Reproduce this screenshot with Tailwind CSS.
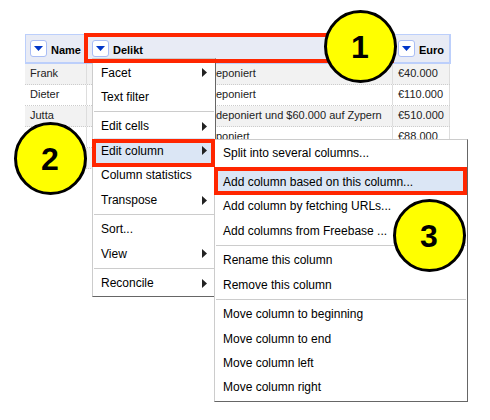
<!DOCTYPE html>
<html lang="en">
<head>
<meta charset="utf-8">
<title>Edit column menu</title>
<script src="https://cdn.jsdelivr.net/npm/@tailwindcss/browser@4"></script>
</head>
<body class="relative w-[490px] h-[420px] overflow-hidden bg-white font-['Liberation_Sans',Arial,sans-serif] text-[12px] text-[#222]">

<!-- Data table -->
<div class="pt-[34px] pl-[25px] text-[11px]">
  <div class="flex w-[426px] h-[30px] box-border border-2 border-t border-l border-[#bccffb] bg-[#e8ebf5] font-bold text-black">
    <div class="flex w-[61px] gap-[4px] pl-[4px] pt-[5px]">
      <span class="flex w-[17px] h-[17px] shrink-0 items-center justify-center rounded-[3px] border border-[#a9bdf5] bg-white"><svg width="9" height="5" viewBox="0 0 9 5"><path d="M0 0H9L4.5 5Z" fill="#0036c8"/></svg></span>
      <span class="leading-[21px]">Name</span>
    </div>
    <div class="flex w-[307px] gap-[4px] pl-[5px] pt-[5px]">
      <span class="flex w-[17px] h-[17px] shrink-0 items-center justify-center rounded-[3px] border border-[#a9bdf5] bg-white"><svg width="9" height="5" viewBox="0 0 9 5"><path d="M0 0H9L4.5 5Z" fill="#0036c8"/></svg></span>
      <span class="leading-[21px]">Delikt</span>
    </div>
    <div class="flex gap-[4px] pl-[4px] pt-[5px]">
      <span class="flex w-[17px] h-[17px] shrink-0 items-center justify-center rounded-[3px] border border-[#a9bdf5] bg-white"><svg width="9" height="5" viewBox="0 0 9 5"><path d="M0 0H9L4.5 5Z" fill="#0036c8"/></svg></span>
      <span class="leading-[21px]">Euro</span>
    </div>
  </div>
  <div class="w-[425px] leading-[19px] whitespace-nowrap">
    <div class="flex h-[21px] bg-[#f2f2f2] border-b border-dotted border-[#ccc]"><div class="w-[62px] pl-[5px] border-r border-[#ddd]">Frank</div><div class="w-[306px] pl-[129px] border-r border-[#ddd]">eponiert</div><div class="w-[57px] pl-[5px] border-r border-[#ddd]">€40.000</div></div>
    <div class="flex h-[21px] bg-white border-b border-dotted border-[#ccc]"><div class="w-[62px] pl-[5px] border-r border-[#ddd]">Dieter</div><div class="w-[306px] pl-[129px] border-r border-[#ddd]">eponiert</div><div class="w-[57px] pl-[5px] border-r border-[#ddd]">€110.000</div></div>
    <div class="flex h-[21px] bg-[#f2f2f2] border-b border-dotted border-[#ccc]"><div class="w-[62px] pl-[5px] border-r border-[#ddd]">Jutta</div><div class="w-[306px] pl-[129px] border-r border-[#ddd]">deponiert und $60.000 auf Zypern</div><div class="w-[57px] pl-[5px] border-r border-[#ddd]">€510.000</div></div>
    <div class="flex h-[21px] bg-white border-b border-dotted border-[#ccc]"><div class="w-[62px] border-r border-[#ddd]"></div><div class="w-[306px] pl-[129px] border-r border-[#ddd]">poniert</div><div class="w-[57px] pl-[5px] border-r border-[#ddd]">€88.000</div></div>
    <div class="flex w-[70px] h-[21px] bg-[#f2f2f2] border-b border-dotted border-[#ccc]"><div class="w-[62px] border-r border-[#ddd]"></div></div>
  </div>
</div>

<!-- Column menu -->
<div class="absolute left-[92px] top-[58px] w-[124px] h-[239px] border border-[#ccc] border-r-[#666] border-b-[#666] bg-white pt-px px-px text-[12px] leading-[24px] text-black whitespace-nowrap">
  <div class="flex items-center justify-between h-[25px] pl-[7px] pr-[7px]">Facet<svg width="5" height="9" viewBox="0 0 5 9"><path d="M0 0L5 4.5L0 9Z" fill="#222"/></svg></div>
  <div class="h-[24px] pl-[7px]">Text filter</div>
  <div class="h-[5px] pt-[2px]"><div class="h-px bg-[#ccc]"></div></div>
  <div class="flex items-center justify-between h-[24px] pl-[7px] pr-[7px]">Edit cells<svg width="5" height="9" viewBox="0 0 5 9"><path d="M0 0L5 4.5L0 9Z" fill="#222"/></svg></div>
  <div class="flex items-center justify-between h-[25px] pl-[7px] pr-[7px] bg-[#dbe6f5]">Edit column<svg width="5" height="9" viewBox="0 0 5 9"><path d="M0 0L5 4.5L0 9Z" fill="#222"/></svg></div>
  <div class="h-[25px] pl-[7px]">Column statistics</div>
  <div class="flex items-center justify-between h-[24px] pl-[7px] pr-[7px]">Transpose<svg width="5" height="9" viewBox="0 0 5 9"><path d="M0 0L5 4.5L0 9Z" fill="#222"/></svg></div>
  <div class="h-[5px] pt-[2px]"><div class="h-px bg-[#ccc]"></div></div>
  <div class="h-[24px] pl-[7px]">Sort...</div>
  <div class="flex items-center justify-between h-[25px] pl-[7px] pr-[7px]">View<svg width="5" height="9" viewBox="0 0 5 9"><path d="M0 0L5 4.5L0 9Z" fill="#222"/></svg></div>
  <div class="h-[5px] pt-[2px]"><div class="h-px bg-[#ccc]"></div></div>
  <div class="flex items-center justify-between h-[24px] pl-[7px] pr-[7px]">Reconcile<svg width="5" height="9" viewBox="0 0 5 9"><path d="M0 0L5 4.5L0 9Z" fill="#222"/></svg></div>
</div>

<!-- Edit column submenu -->
<div class="absolute left-[214px] top-[139px] w-[254px] h-[263px] border border-[#ccc] border-r-[#666] border-b-[#666] bg-white pt-px px-px text-[12px] leading-[24px] text-black whitespace-nowrap">
  <div class="h-[24px] pl-[7px]">Split into several columns...</div>
  <div class="h-[5px] pt-[2px]"><div class="h-px bg-[#ccc]"></div></div>
  <div class="h-[24px] pl-[7px] bg-[#dbe6f5]">Add column based on this column...</div>
  <div class="h-[25px] pl-[7px]">Add column by fetching URLs...</div>
  <div class="h-[24px] pl-[7px]">Add columns from Freebase ...</div>
  <div class="h-[5px] pt-[2px]"><div class="h-px bg-[#ccc]"></div></div>
  <div class="h-[25px] pl-[7px]">Rename this column</div>
  <div class="h-[24px] pl-[7px]">Remove this column</div>
  <div class="h-[5px] pt-[2px]"><div class="h-px bg-[#ccc]"></div></div>
  <div class="h-[25px] pl-[7px]">Move column to beginning</div>
  <div class="h-[24px] pl-[7px]">Move column to end</div>
  <div class="h-[24px] pl-[7px]">Move column left</div>
  <div class="h-[24px] pl-[7px]">Move column right</div>
</div>

<!-- Highlight frames -->
<div class="absolute left-[84px] top-[33px] w-[310px] h-[30px] border-4 border-[#ff2600]"></div>
<div class="absolute left-[92px] top-[139px] w-[123px] h-[28px] border-4 border-[#ff2600]"></div>
<div class="absolute left-[214px] top-[167px] w-[253px] h-[28px] border-4 border-[#ff2600]"></div>

<!-- Numbered step badges -->
<div class="absolute left-[323.5px] top-[10px] flex size-[73px] items-center justify-center rounded-full border-3 border-black bg-[#ffff00] text-[32px] font-bold text-black">1</div>
<div class="absolute left-[13.5px] top-[122px] flex size-[73px] items-center justify-center rounded-full border-3 border-black bg-[#ffff00] text-[32px] font-bold text-black">2</div>
<div class="absolute left-[392.5px] top-[199px] flex size-[73px] items-center justify-center rounded-full border-3 border-black bg-[#ffff00] text-[32px] font-bold text-black">3</div>
</body>
</html>
